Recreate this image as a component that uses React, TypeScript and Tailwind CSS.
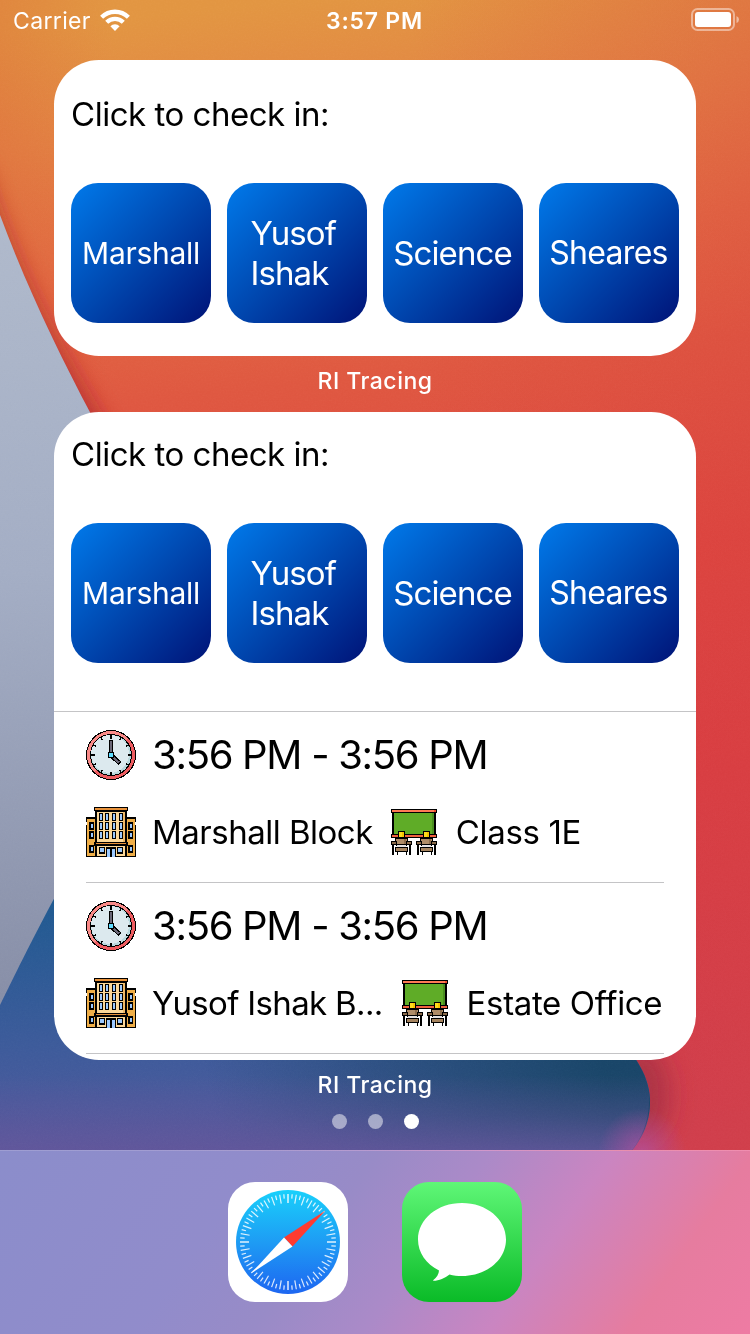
import React from "react";

const blocks = [
  { name: "Marshall", cls: "text-[30px] tracking-[-0.3px]" },
  { name: "Yusof Ishak", cls: "text-[33px] tracking-[-0.9px] w-[93px]" },
  { name: "Science", cls: "text-[33px] tracking-[-0.9px] -ml-px" },
  { name: "Sheares", cls: "text-[32px] tracking-[-0.7px] -ml-px" },
];

function Wallpaper() {
  return (
    <svg className="absolute inset-0" width="750" height="1334" viewBox="0 0 750 1334" aria-hidden="true">
      <defs>
        <linearGradient id="warm" gradientUnits="userSpaceOnUse" x1="300" y1="0" x2="420" y2="1150">
          <stop offset="0" stopColor="#e29541" />
          <stop offset="0.1" stopColor="#e38443" />
          <stop offset="0.22" stopColor="#e26a42" />
          <stop offset="0.33" stopColor="#df5740" />
          <stop offset="0.5" stopColor="#dd453f" />
          <stop offset="0.7" stopColor="#d83c43" />
          <stop offset="1" stopColor="#cd3d50" />
        </linearGradient>
        <linearGradient id="edge" gradientUnits="userSpaceOnUse" x1="0" y1="0" x2="750" y2="0">
          <stop offset="0" stopColor="#d84a30" stopOpacity="0.2" />
          <stop offset="0.15" stopColor="#d84a30" stopOpacity="0" />
          <stop offset="0.55" stopColor="#d83a3c" stopOpacity="0" />
          <stop offset="1" stopColor="#d8403c" stopOpacity="0.3" />
        </linearGradient>
        <linearGradient id="slate" x1="0" y1="0" x2="0" y2="1">
          <stop offset="0" stopColor="#afb9cb" />
          <stop offset="0.45" stopColor="#a3adc4" />
          <stop offset="1" stopColor="#868da6" />
        </linearGradient>
        <linearGradient id="sea" gradientUnits="userSpaceOnUse" x1="0" y1="900" x2="0" y2="1150">
          <stop offset="0" stopColor="#1f5990" />
          <stop offset="0.6" stopColor="#3d5a9a" />
          <stop offset="1" stopColor="#50589c" />
        </linearGradient>
        <linearGradient id="deep" gradientUnits="userSpaceOnUse" x1="220" y1="1140" x2="600" y2="1050">
          <stop offset="0" stopColor="#12415f" stopOpacity="0" />
          <stop offset="0.5" stopColor="#12415f" stopOpacity="0.45" />
          <stop offset="1" stopColor="#12415f" stopOpacity="0.85" />
        </linearGradient>
        <linearGradient id="glow" gradientUnits="userSpaceOnUse" x1="0" y1="1075" x2="0" y2="1158">
          <stop offset="0" stopColor="#62559a" stopOpacity="0" />
          <stop offset="0.5" stopColor="#62559a" stopOpacity="0.4" />
          <stop offset="1" stopColor="#62559a" stopOpacity="0.95" />
        </linearGradient>
        <radialGradient id="pink" gradientUnits="userSpaceOnUse" cx="642" cy="1152" r="44">
          <stop offset="0" stopColor="#b04fa0" stopOpacity="0.75" />
          <stop offset="1" stopColor="#b04fa0" stopOpacity="0" />
        </radialGradient>
        <filter id="soft" x="-100%" y="-50%" width="300%" height="200%">
          <feGaussianBlur stdDeviation="12" />
        </filter>
        <filter id="grain" x="0" y="0" width="100%" height="100%">
          <feTurbulence type="fractalNoise" baseFrequency="0.6" numOctaves="2" seed="4" />
          <feColorMatrix type="saturate" values="0" />
        </filter>
      </defs>
      <rect width="750" height="1334" fill="url(#warm)" />
      <rect width="750" height="1334" fill="url(#edge)" />
      <path d="M-30 170C0 270 44 352 104 450" fill="none" stroke="#a01c26" strokeOpacity="0.8" strokeWidth="22" filter="url(#soft)" />
      <ellipse cx="642" cy="1095" rx="28" ry="50" fill="#8f2740" fillOpacity="0.55" filter="url(#soft)" />
      <path d="M0 215C26 285 58 352 92 416V1010H0Z" fill="url(#slate)" />
      <path d="M0 1005C16 972 35 934 56 895L620 1040C641 1062 650 1082 650 1102C650 1125 640 1142 628 1155H0Z" fill="url(#sea)" />
      <path d="M0 1005C16 972 35 934 56 895L620 1040C641 1062 650 1082 650 1102C650 1125 640 1142 628 1155H0Z" fill="url(#deep)" />
      <path d="M0 1070H644C655 1102 648 1132 628 1155H0Z" fill="url(#glow)" />
      <circle cx="642" cy="1152" r="44" fill="url(#pink)" />
      <rect width="750" height="1150" filter="url(#grain)" opacity="0.12" className="mix-blend-soft-light" />
    </svg>
  );
}

function StatusBar() {
  return (
    <div className="grid h-10 grid-cols-3 items-center pt-px pl-[13px] pr-[11px] text-[23px] leading-10">
      <div className="flex items-center gap-[9px]">
        <span className="tracking-[0.35px]">Carrier</span>
        <svg width="30" height="22" viewBox="0 0 30 22" className="mb-0.5">
          <g fill="none" stroke="#fff" strokeWidth="4.3">
            <path d="M1.6 8.2A19.2 19.2 0 0 1 28.4 8.2" />
            <path d="M6.7 13.3A12 12 0 0 1 23.3 13.3" />
          </g>
          <path d="M10.4 17.2A6.6 6.6 0 0 1 19.6 17.2L15 22Z" fill="#fff" />
        </svg>
      </div>
      <div className="-ml-[3px] text-center font-semibold tracking-[0.75px]">3:57 PM</div>
      <div className="flex justify-end">
        <svg width="48" height="24" viewBox="0 0 48 24" className="mb-0.5">
          <rect x="1" y="1" width="42" height="21" rx="5.5" fill="none" stroke="#fff" strokeOpacity="0.45" strokeWidth="2" />
          <rect x="4" y="4" width="36" height="15" rx="3" fill="#fff" />
          <path d="M45.5 8Q48 9 48 11.5T45.5 15Z" fill="#fff" fillOpacity="0.5" />
        </svg>
      </div>
    </div>
  );
}

function CheckIn() {
  return (
    <div className="px-[17px]">
      <h2 className="text-[33px] leading-10 tracking-[-0.48px]">Click to check in:</h2>
      <div className="mt-[49px] flex gap-4">
        {blocks.map((b) => (
          <button
            key={b.name}
            className="flex size-[140px] items-center justify-center rounded-[27px] bg-[linear-gradient(135deg,#007aeb_0%,#0048b0_50%,#001377_100%)] text-white"
          >
            <span className={`text-left leading-10 ${b.cls}`}>{b.name}</span>
          </button>
        ))}
      </div>
    </div>
  );
}

function ClockIcon() {
  const ticks = [0, 30, 60, 90, 120, 150, 180, 210, 240, 270, 300, 330];
  return (
    <svg width="50" height="50" viewBox="0 0 50 50" shapeRendering="crispEdges" className="shrink-0">
      <circle cx="25" cy="25" r="25" fill="#000" />
      <circle cx="25" cy="25" r="24" fill="#f98a88" />
      <path d="M42 8A24 24 0 0 1 8 42Z" fill="#ee5c60" />
      <circle cx="25" cy="25" r="21" fill="#000" />
      <circle cx="25" cy="25" r="20" fill="#b9d8dd" />
      <circle cx="24" cy="24" r="19" fill="#dce9ee" />
      {ticks.map((a) => (
        <path
          key={a}
          d={a % 90 === 0 ? "M25 4.5V8.5" : "M25 4.5V8"}
          stroke="#000"
          strokeWidth={a % 90 === 0 ? 2 : 1.5}
          transform={`rotate(${a} 25 25)`}
        />
      ))}
      <path d="M25 25V10M25 25L34 33.5" stroke="#000" strokeWidth="4.6" />
      <path d="M25 25V11M25 25L33 32.5" stroke="#6b6878" strokeWidth="2.2" />
      <rect x="22" y="22" width="6" height="6" rx="1" fill="#000" />
      <rect x="23" y="23" width="4" height="4" fill="#5fdcff" />
    </svg>
  );
}

function BuildingIcon() {
  return (
    <svg width="50" height="50" viewBox="0 0 50 50" shapeRendering="crispEdges" className="shrink-0">
      <rect x="0" y="10" width="50" height="40" fill="#000" />
      <rect x="1" y="12" width="48" height="37" fill="#efae48" />
      <path d="M0 15h1v3H0zM49 15h1v3h-1z" fill="#fff" />
      <rect x="9" y="3" width="32" height="47" fill="#000" />
      <rect x="11" y="5" width="28" height="44" fill="#fbd798" />
      <rect x="8" y="0" width="34" height="4" fill="#000" />
      <rect x="9" y="1" width="32" height="2" fill="#e8923a" />
      <rect x="37" y="5" width="2" height="30" fill="#eeb868" />
      <rect x="8" y="35" width="34" height="4" fill="#000" />
      <rect x="10" y="36" width="30" height="1" fill="#e8923a" />
      {[6, 15, 24].map((y) =>
        [13, 19, 26, 33].map((x) => (
          <g key={`${x}-${y}`}>
            <rect x={x} y={y} width="4" height="8" fill="#000" />
            <rect x={x + 1} y={y + 1} width="2" height="6" fill="#9cc9ff" />
          </g>
        ))
      )}
      {[15, 24, 38].map((y) =>
        [3, 42].map((x) => (
          <g key={`${x}-${y}`}>
            <rect x={x} y={y} width="5" height="8" fill="#000" />
            <rect x={x + 2} y={y + 2} width="2" height="4" fill="#9cc9ff" />
          </g>
        ))
      )}
      {[13, 31].map((x) => (
        <g key={x}>
          <rect x={x} y="40" width="6" height="7" fill="#000" />
          <rect x={x + 1} y="41" width="4" height="4" fill="#9cc9ff" />
        </g>
      ))}
      <rect x="20" y="40" width="10" height="10" fill="#000" />
      <rect x="21" y="42" width="3" height="8" fill="#9cc9ff" />
      <rect x="26" y="42" width="3" height="8" fill="#9cc9ff" />
    </svg>
  );
}

function Desk({ x }: { x: number }) {
  return (
    <g transform={`translate(${x} 0)`}>
      <rect x="7" y="22" width="7" height="7" fill="#000" />
      <rect x="8" y="23" width="5" height="5" fill="#f7c500" />
      <rect x="8" y="23" width="3" height="5" fill="#ffdc1e" />
      <rect x="0" y="32" width="21" height="4" fill="#000" />
      <rect x="1" y="33" width="19" height="2" fill="#8a6a4a" />
      <path d="M4 29h13v3h-1v5h-1v1H6v-1H5v-5H4z" fill="#000" />
      <path d="M5 30h11v2h-1v3H6v-3H5z" fill="#b08d68" />
      <rect x="13" y="30" width="2" height="5" fill="#8f6e4c" />
      <rect x="6" y="36" width="9" height="2" fill="#e7e3e3" />
      <rect x="1" y="36" width="2" height="10" fill="#000" />
      <rect x="18" y="36" width="2" height="10" fill="#000" />
      <rect x="4" y="38" width="13" height="5" fill="#000" />
      <rect x="5" y="39" width="11" height="3" fill="#a5835e" />
      <rect x="6" y="43" width="1" height="3" fill="#000" />
      <rect x="15" y="43" width="1" height="3" fill="#000" />
    </g>
  );
}

function RoomIcon() {
  return (
    <svg width="46" height="46" viewBox="0 0 46 46" shapeRendering="crispEdges" className="shrink-0">
      <rect x="1" y="3" width="44" height="24" fill="#000" />
      <rect x="3" y="4" width="40" height="21" fill="#5fac27" />
      <rect x="41" y="4" width="2" height="21" fill="#4b8f20" />
      <rect x="0" y="0" width="46" height="4" fill="#000" />
      <rect x="1" y="1" width="44" height="2" fill="#ff7a55" />
      <rect x="43" y="1" width="2" height="2" fill="#f04a2a" />
      <rect x="0" y="25" width="46" height="4" fill="#000" />
      <rect x="1" y="26" width="44" height="2" fill="#f0623f" />
      <Desk x={0} />
      <Desk x={25} />
    </svg>
  );
}

function Visit({ block, room, blockCls }: { block: string; room: string; blockCls: string }) {
  return (
    <div className="mx-8 h-[171px] border-b border-[#c4c4c6] pt-[18px]">
      <div className="flex h-[50px] items-center gap-4">
        <ClockIcon />
        <span className="text-[40px] leading-[50px] tracking-[-1.3px]">3:56 PM - 3:56 PM</span>
      </div>
      <div className="mt-[27px] flex h-[50px] items-center text-[33px] leading-[50px] whitespace-nowrap">
        <BuildingIcon />
        <span className={`ml-4 ${blockCls}`}>{block}</span>
        <RoomIcon />
        <span className="ml-[19px] tracking-[-0.35px]">{room}</span>
      </div>
    </div>
  );
}

function SafariIcon() {
  const ticks = Array.from({ length: 72 }, (_, i) => i);
  return (
    <svg width="120" height="120" viewBox="0 0 120 120">
      <defs>
        <linearGradient id="compass" x1="0" y1="0" x2="0" y2="1">
          <stop offset="0" stopColor="#19d0fb" />
          <stop offset="0.5" stopColor="#1e9cf4" />
          <stop offset="1" stopColor="#1d66f1" />
        </linearGradient>
      </defs>
      <rect width="120" height="120" rx="27" fill="#fff" />
      <circle cx="60" cy="60" r="52" fill="url(#compass)" />
      {ticks.map((i) => (
        <path
          key={i}
          d={i % 2 === 0 ? "M60 12V21" : "M60 12V16.5"}
          stroke="#fff"
          strokeOpacity={i % 18 === 0 ? 0.65 : 0.85}
          strokeWidth={i % 18 === 0 ? 2 : 1.2}
          transform={`rotate(${i * 5} 60 60)`}
        />
      ))}
      <path d="M97.5 28.5L56 55.5L64.5 64.5Z" fill="#ff3b30" />
      <path d="M23 91.5L56 55.5L64.5 64.5Z" fill="#fff" />
    </svg>
  );
}

function MessagesIcon() {
  return (
    <svg width="120" height="120" viewBox="0 0 120 120">
      <defs>
        <linearGradient id="mint" x1="0" y1="0" x2="0" y2="1">
          <stop offset="0" stopColor="#5ff777" />
          <stop offset="1" stopColor="#0abb27" />
        </linearGradient>
      </defs>
      <rect width="120" height="120" rx="27" fill="url(#mint)" />
      <path
        d="M60 21C84.5 21 104 37 104 57.5S84.5 94 60 94C55.5 94 51.5 93.5 47.5 92.5C43 96 37 98.8 31.5 98.8C31 98.8 31 98.3 31.4 98C34.5 95.5 37 92 37 88.5C24 82 16 70.5 16 57.5C16 37 35.5 21 60 21Z"
        fill="#fff"
      />
    </svg>
  );
}

export default function App() {
  return (
    <div className="relative h-[1334px] w-[750px] overflow-hidden font-[Inter,'Liberation_Sans',sans-serif] text-white">
      <Wallpaper />
      <div className="relative flex h-full flex-col">
        <StatusBar />
        <main className="flex flex-1 flex-col items-center pt-5">
          <section className="h-[296px] w-[642px] rounded-[45px] bg-white pt-[34px] text-black">
            <CheckIn />
          </section>
          <p className="h-14 text-[23px] leading-[50px] font-medium tracking-[0.5px]">RI Tracing</p>
          <section className="h-[648px] w-[642px] overflow-hidden rounded-[45px] bg-white pt-[22px] text-black">
            <CheckIn />
            <div className="mt-12 border-t border-[#c4c4c6]">
              <Visit block="Marshall Block" room="Class 1E" blockCls="mr-[18px] tracking-[-0.5px]" />
              <Visit block="Yusof Ishak B..." room="Estate Office" blockCls="mr-[19px] tracking-[-0.66px]" />
            </div>
          </section>
          <p className="text-[23px] leading-[50px] font-medium tracking-[0.5px]">RI Tracing</p>
          <div className="mt-1 flex gap-[21px]">
            <span className="size-[15px] rounded-full bg-white/50" />
            <span className="size-[15px] rounded-full bg-white/50" />
            <span className="size-[15px] rounded-full bg-white" />
          </div>
        </main>
        <footer className="flex h-[184px] justify-center gap-[54px] border-t border-white/15 bg-[linear-gradient(125deg,#8b8dcb_0%,#918ccb_30%,#988bc7_43%,#ab8ac8_56%,#ca85c1_70%,#e67c9f_86%,#ee7ba3_100%)] pt-[31px]">
          <SafariIcon />
          <MessagesIcon />
        </footer>
      </div>
    </div>
  );
}
